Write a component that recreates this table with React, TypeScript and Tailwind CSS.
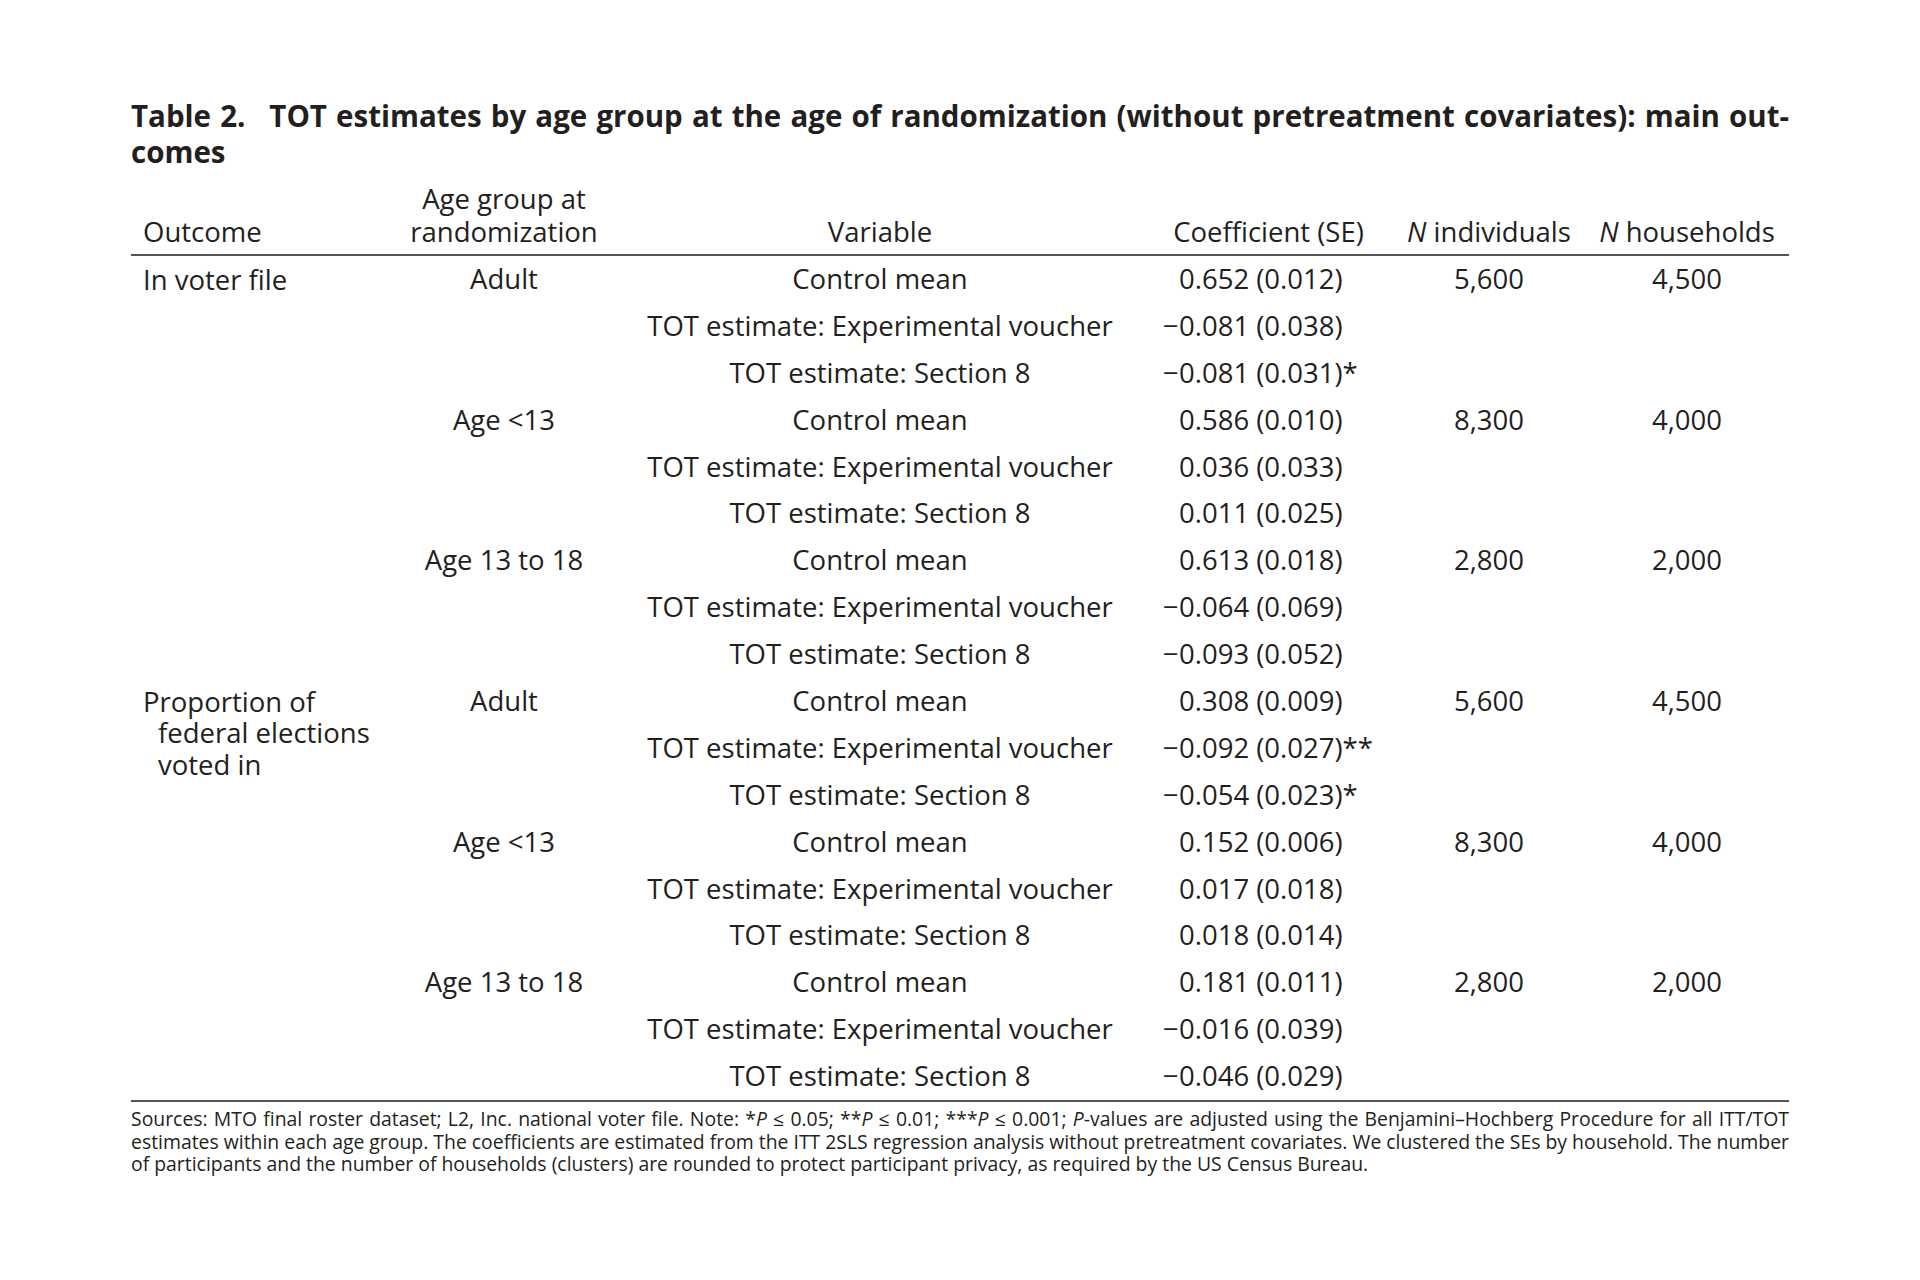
import React from 'react';

const VARIABLES = [
  'Control mean',
  'TOT estimate: Experimental voucher',
  'TOT estimate: Section 8',
];

interface AgeGroup {
  age: string;
  individuals: string;
  households: string;
  values: string[];
}

interface OutcomeGroup {
  outcome: string[];
  ages: AgeGroup[];
}

const groups: OutcomeGroup[] = [
  {
    outcome: ['In voter file'],
    ages: [
      { age: 'Adult', individuals: '5,600', households: '4,500', values: ['0.652 (0.012)', '−0.081 (0.038)', '−0.081 (0.031)*'] },
      { age: 'Age <13', individuals: '8,300', households: '4,000', values: ['0.586 (0.010)', '0.036 (0.033)', '0.011 (0.025)'] },
      { age: 'Age 13 to 18', individuals: '2,800', households: '2,000', values: ['0.613 (0.018)', '−0.064 (0.069)', '−0.093 (0.052)'] },
    ],
  },
  {
    outcome: ['Proportion of', 'federal elections', 'voted in'],
    ages: [
      { age: 'Adult', individuals: '5,600', households: '4,500', values: ['0.308 (0.009)', '−0.092 (0.027)**', '−0.054 (0.023)*'] },
      { age: 'Age <13', individuals: '8,300', households: '4,000', values: ['0.152 (0.006)', '0.017 (0.018)', '0.018 (0.014)'] },
      { age: 'Age 13 to 18', individuals: '2,800', households: '2,000', values: ['0.181 (0.011)', '−0.016 (0.039)', '−0.046 (0.029)'] },
    ],
  },
];

// numbers line up on the first digit; minus hangs left, stars hang right
const Coefficient: React.FC<{ value: string }> = ({ value }) => {
  const neg = value.startsWith('−');
  const body = neg ? value.slice(1) : value;
  const stars = body.match(/\**$/)?.[0] ?? '';
  const num = body.slice(0, body.length - stars.length);
  return (
    <div className="flex pl-[26px] leading-[46.9px] whitespace-nowrap">
      <span className="w-[16px]">{neg ? '−' : ''}</span>
      <span>{num}</span>
      <span>{stars}</span>
    </div>
  );
};

const cols = 'grid grid-cols-[254px_238px_514px_263px_178px_211px]';

export default function App() {
  return (
    <div
      className="w-[1920px] h-[1280px] bg-white text-[#231f20]"
      style={{ fontFamily: '"Open Sans", "Liberation Sans", sans-serif' }}
    >
      <div className="ml-[131px] w-[1658px] pt-[98px]">
        {/* Caption */}
        <div className="text-[29.5px] leading-[35.5px] font-bold">
          <div className="text-justify [text-align-last:justify]">
            Table 2.{'\u2002'} TOT estimates by age group at the age of randomization (without pretreatment covariates): main out-
          </div>
          <div>comes</div>
        </div>

        {/* Header */}
        <div className={`${cols} mt-[13px] items-end pb-[6px] border-b-2 border-[#555] text-[27.5px] leading-[33px]`}>
          <div className="pl-3">Outcome</div>
          <div className="text-center">
            Age group at
            <br />
            randomization
          </div>
          <div className="text-center">Variable</div>
          <div className="text-center">Coefficient (SE)</div>
          <div className="text-center">
            <i>N</i> individuals
          </div>
          <div className="text-center pl-[7px]">
            <i>N</i> households
          </div>
        </div>

        {/* Body */}
        <div className={`${cols} auto-rows-[46.9px] text-[27.5px] border-b-2 border-[#555]`}>
          {groups.map((g, gi) => (
            <React.Fragment key={gi}>
              <div className="row-span-9 pl-[27px] pt-[7.5px] leading-[31.8px] [text-indent:-15px]">
                {g.outcome.map((line, li) => (
                  <React.Fragment key={li}>
                    {li > 0 && <br />}
                    {line}
                  </React.Fragment>
                ))}
              </div>
              {g.ages.map((a, ai) => (
                <React.Fragment key={ai}>
                  <div className="row-span-3 text-center leading-[46.9px]">{a.age}</div>
                  {VARIABLES.map((v, vi) => (
                    <React.Fragment key={vi}>
                      <div className="text-center leading-[46.9px] whitespace-nowrap">{v}</div>
                      <Coefficient value={a.values[vi]} />
                      <div className="text-center leading-[46.9px]">{vi === 0 ? a.individuals : ''}</div>
                      <div className="text-center pl-[7px] leading-[46.9px]">{vi === 0 ? a.households : ''}</div>
                    </React.Fragment>
                  ))}
                </React.Fragment>
              ))}
            </React.Fragment>
          ))}
        </div>

        {/* Footnote */}
        <div className="mt-[6px] text-[19.4px] leading-[22.5px]">
          <div className="text-justify [text-align-last:justify] [word-spacing:-3px]">
            Sources: MTO final roster dataset; L2, Inc. national voter file. Note: *<i>P</i> ≤ 0.05; **<i>P</i> ≤ 0.01; ***<i>P</i> ≤ 0.001; <i>P</i>-values are adjusted using the Benjamini–Hochberg Procedure for all ITT/TOT
          </div>
          <div className="text-justify [text-align-last:justify] [word-spacing:-3px]">
            estimates within each age group. The coefficients are estimated from the ITT 2SLS regression analysis without pretreatment covariates. We clustered the SEs by household. The number
          </div>
          <div>
            of participants and the number of households (clusters) are rounded to protect participant privacy, as required by the US Census Bureau.
          </div>
        </div>
      </div>
    </div>
  );
}
